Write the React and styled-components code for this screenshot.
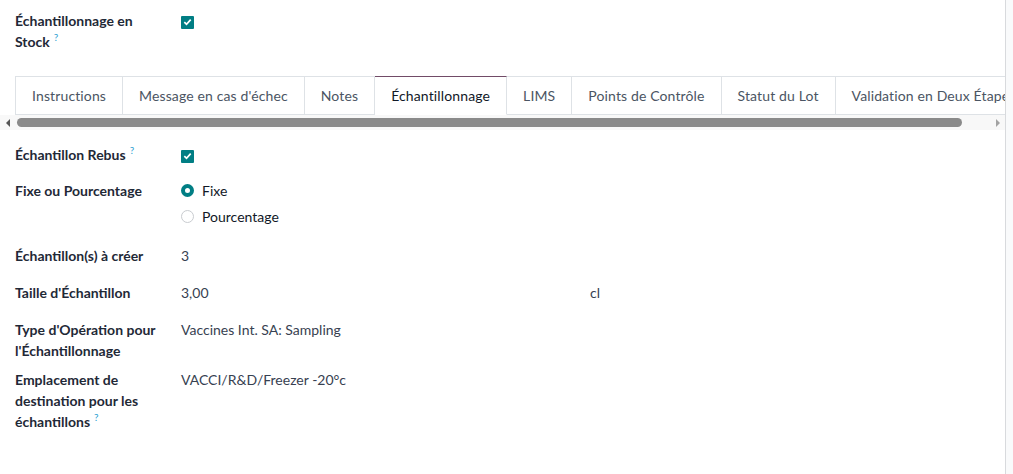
import styled, { createGlobalStyle } from 'styled-components';

// ── 전역 스타일 ──
const GlobalStyle = createGlobalStyle`
  html, body {
    margin: 0;
    padding: 0;
    background: #f9fafb;
  }
  body {
    font-family: Lato, "Liberation Sans", sans-serif;
    font-size: 14px;
    line-height: 21px;
    color: #111827;
  }
`;

// ── Styled Components ──

/** 폼 시트 — 오른쪽 테두리 */
const Sheet = styled.div`
  width: 1006px;
  min-height: 474px;
  box-sizing: border-box;
  background: #fff;
  border-right: 1px solid #d8dadd;
  padding-top: 10px;
`;

const Group = styled.div`
  padding: 0 15px;
`;

const Row = styled.div`
  display: grid;
  grid-template-columns: 166px 1fr;
  margin-bottom: ${({ $gap }) => $gap ?? 16}px;
`;

const Label = styled.div`
  font-weight: 700;
  color: #1f2937;
  padding-right: 10px;
`;

const Help = styled.sup`
  color: #2d9fd3;
  font-size: 10px;
  line-height: 0;
  font-weight: 400;
  margin-left: 4px;
  vertical-align: 6px;
`;

const Value = styled.div`
  color: #374151;
  display: flex;
  justify-content: space-between;
  padding-right: 390px;
`;

const Check = styled.span`
  display: inline-flex;
  align-items: center;
  justify-content: center;
  width: 13px;
  height: 13px;
  margin-top: 4px;
  background: #017e84;
  border-radius: 1px;
`;

const RadioList = styled.div`
  display: flex;
  flex-direction: column;
  gap: 5px;
  padding-bottom: 2px;
`;

const RadioItem = styled.label`
  display: flex;
  align-items: center;
  gap: 8px;
  color: #111827;
`;

const RadioDot = styled.span`
  width: 13px;
  height: 13px;
  box-sizing: border-box;
  border-radius: 50%;
  border: ${({ $on }) => ($on ? '4px solid #017e84' : '1px solid #c9ccd0')};
  background: #fff;
`;

/** 탭 바 — 잘린 가로 영역 */
const TabStrip = styled.div`
  margin-top: 24px;
  overflow: hidden;
  padding-left: 15px;
`;

const TabList = styled.div`
  display: flex;
  width: max-content;
  border-bottom: 1px solid #dee2e6;
`;

const Tab = styled.div`
  padding: 8px 16px 8px;
  letter-spacing: 0.13px;
  white-space: nowrap;
  margin-bottom: -1px;
  border: 1px solid #dee2e6;
  border-left: ${({ $first }) => ($first ? '1px solid #dee2e6' : 'none')};
  border-top: 1px solid ${({ $active }) => ($active ? '#714b67' : '#dee2e6')};
  border-bottom-color: ${({ $active }) => ($active ? '#fff' : '#dee2e6')};
  color: ${({ $active }) => ($active ? '#111827' : '#4b5563')};
  background: #fff;
`;

/** 탭 바 아래 가로 스크롤바 모양 */
const ScrollTrack = styled.div`
  display: flex;
  align-items: center;
  height: 15px;
  background: #f8f8f8;
  margin-bottom: 14px;
`;

const ScrollArrow = styled.span`
  width: 15px;
  height: 15px;
  display: flex;
  align-items: center;
  justify-content: center;
  &::before {
    content: '';
    border-top: 4px solid transparent;
    border-bottom: 4px solid transparent;
    ${({ $dir, $color }) =>
      $dir === 'left'
        ? `border-right: 4px solid ${$color};`
        : `border-left: 4px solid ${$color};`}
  }
`;

const ScrollThumb = styled.span`
  margin-left: 2px;
  width: 945px;
  height: 9px;
  border-radius: 5px;
  background: #8a8a8a;
`;

const Spacer = styled.span`
  flex: 1;
`;

function CheckBox() {
  return (
    <Check>
      <svg width="9" height="8" viewBox="0 0 9 8">
        <path d="M1.3 4.2 L3.5 6.2 L7.7 1.6" fill="none" stroke="#fff" strokeWidth="1.7" />
      </svg>
    </Check>
  );
}

const tabs = [
  'Instructions',
  "Message en cas d'échec",
  'Notes',
  'Échantillonnage',
  'LIMS',
  'Points de Contrôle',
  'Statut du Lot',
  'Validation en Deux Étapes',
];

export default function App() {
  return (
    <>
      <GlobalStyle />
      <Sheet>
        <Group>
          <Row $gap={0}>
            <Label>
              Échantillonnage en Stock<Help>?</Help>
            </Label>
            <div>
              <CheckBox />
            </div>
          </Row>
        </Group>

        <TabStrip>
          <TabList>
            {tabs.map((t, i) => (
              <Tab key={t} $first={i === 0} $active={t === 'Échantillonnage'}>
                {t}
              </Tab>
            ))}
          </TabList>
        </TabStrip>
        <ScrollTrack>
          <ScrollArrow $dir="left" $color="#555" />
          <ScrollThumb />
          <Spacer />
          <ScrollArrow $dir="right" $color="#a3a3a3" />
        </ScrollTrack>

        <Group>
          <Row $gap={15}>
            <Label>
              Échantillon Rebus<Help>?</Help>
            </Label>
            <div>
              <CheckBox />
            </div>
          </Row>
          <Row $gap={16}>
            <Label>Fixe ou Pourcentage</Label>
            <RadioList>
              <RadioItem>
                <RadioDot $on />
                Fixe
              </RadioItem>
              <RadioItem>
                <RadioDot />
                Pourcentage
              </RadioItem>
            </RadioList>
          </Row>
          <Row>
            <Label>Échantillon(s) à créer</Label>
            <Value>3</Value>
          </Row>
          <Row>
            <Label>Taille d'Échantillon</Label>
            <Value>
              <span>3,00</span>
              <span>cl</span>
            </Value>
          </Row>
          <Row $gap={8}>
            <Label>Type d'Opération pour l'Échantillonnage</Label>
            <Value>Vaccines Int. SA: Sampling</Value>
          </Row>
          <Row>
            <Label>
              Emplacement de destination pour les échantillons<Help>?</Help>
            </Label>
            <Value>VACCI/R&amp;D/Freezer -20°c</Value>
          </Row>
        </Group>
      </Sheet>
    </>
  );
}
